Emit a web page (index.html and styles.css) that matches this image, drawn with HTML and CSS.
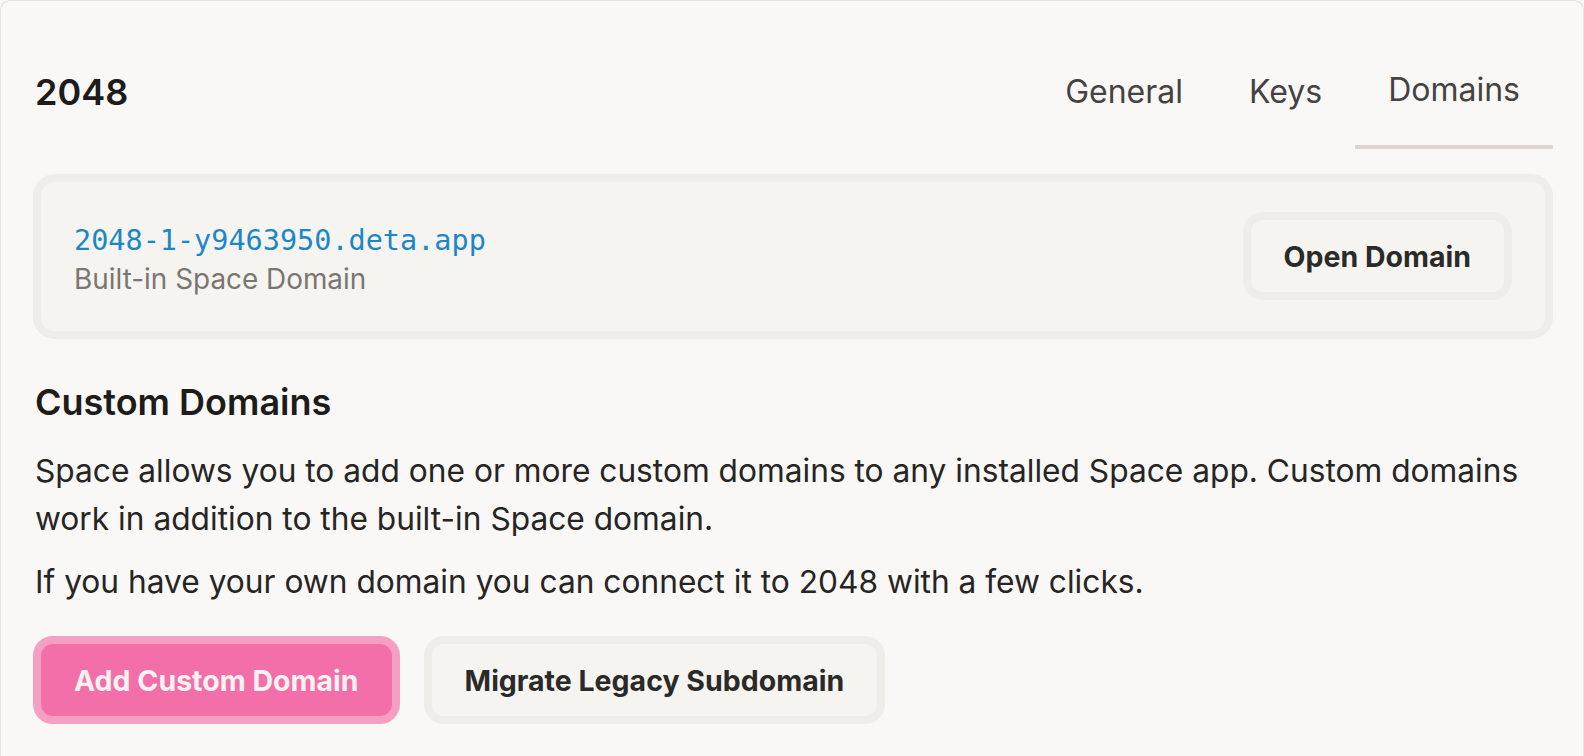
FILE: index.html
```html
<!DOCTYPE html>
<html lang="en">
<head>
<meta charset="utf-8">
<title>2048 – Domains</title>
<link rel="stylesheet" href="styles.css">
</head>
<body>
<div class="card">
  <header class="header">
    <h1 class="title">2048</h1>
    <nav class="tabs">
      <a class="tab">General</a>
      <a class="tab">Keys</a>
      <a class="tab active">Domains</a>
    </nav>
  </header>

  <section class="builtin">
    <div class="builtin-text">
      <div class="domain">2048-1-y9463950.deta.app</div>
      <div class="domain-label">Built-in Space Domain</div>
    </div>
    <button class="btn btn-secondary">Open Domain</button>
  </section>

  <h2 class="section-title">Custom Domains</h2>
  <p class="text">Space allows you to add one or more custom domains to any installed Space app. Custom domains work in addition to the built-in Space domain.</p>
  <p class="text">If you have your own domain you can connect it to 2048 with a few clicks.</p>

  <div class="actions">
    <button class="btn btn-primary">Add Custom Domain</button>
    <button class="btn btn-secondary">Migrate Legacy Subdomain</button>
  </div>
</div>
</body>
</html>
```

FILE: styles.css
```css
* { box-sizing: border-box; }

html, body {
  margin: 0;
  height: 100%;
  background: #f9f8f6;
}

body {
  font-family: Inter, "Noto Sans", sans-serif;
  color: #222120;
  overflow: hidden;
}

.card {
  min-height: 100%;
  background: #f9f8f6;
  border: 1px solid #e6e2de;
  border-bottom: none;
  border-radius: 10px 10px 0 0;
  padding: 0 30px 40px 32px;
}

.header {
  display: flex;
  justify-content: space-between;
  align-items: flex-end;
  height: 148px;
}

.title {
  margin: 0 0 35px 2px;
  font-weight: 600;
  font-size: 36px;
  line-height: 44px;
  color: #1d1c1b;
}

.tabs {
  display: flex;
  align-items: flex-end;
}

.tab {
  display: block;
  padding: 0 33px 33px;
  font-size: 32px;
  line-height: 40px;
  color: #454341;
  border-bottom: 4px solid transparent;
}

.tab.active {
  padding-bottom: 35px;
  border-bottom-color: #ddd5cf;
}

.builtin {
  margin-top: 25px;
  display: flex;
  align-items: center;
  justify-content: space-between;
  border: 8px solid #efede9;
  border-radius: 22px;
  background: #f5f4f1;
  padding: 30px 33px 31px 33px;
}

.builtin-text {
  display: flex;
  flex-direction: column;
  padding-top: 7px;
}

.domain {
  font-family: "DejaVu Sans Mono", "Liberation Mono", monospace;
  font-size: 28.5px;
  line-height: 38px;
  color: #1b87c6;
}

.domain-label {
  font-size: 27.9px;
  line-height: 38px;
  color: #7a7672;
}

.btn {
  display: inline-flex;
  align-items: center;
  justify-content: center;
  height: 88px;
  padding: 0 33px;
  border: 8px solid #efede9;
  border-radius: 20px;
  background: #f5f4f1;
  font-family: Inter, "Noto Sans", sans-serif;
  font-weight: 700;
  font-size: 28.5px;
  color: #2b2a28;
  cursor: pointer;
}

.btn-primary {
  background: #f36fa9;
  border-color: #f59fc3;
  color: #fbf3f1;
}

.section-title {
  margin: 41px 0 0 2px;
  font-weight: 600;
  font-size: 36px;
  line-height: 44px;
  color: #1d1c1b;
}

.text {
  margin: 23px 0 0 2px;
  font-size: 31.7px;
  line-height: 48px;
  color: #262524;
}

.text + .text {
  margin-top: 15px;
}

.actions {
  display: flex;
  gap: 24px;
  margin-top: 30px;
}
```
